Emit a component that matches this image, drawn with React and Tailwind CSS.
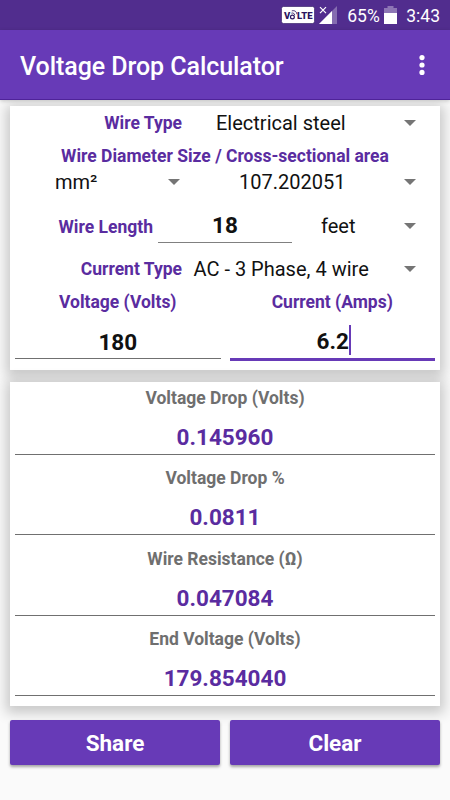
import { useState } from "react";

const results = [
  { label: "Voltage Drop (Volts)", value: "0.145960" },
  { label: "Voltage Drop %", value: "0.0811" },
  { label: "Wire Resistance (Ω)", value: "0.047084" },
  { label: "End Voltage (Volts)", value: "179.854040" },
];

function Caret() {
  return (
    <svg width="12" height="6" viewBox="0 0 12 6" className="shrink-0">
      <path d="M0 0h12L6 6z" fill="#757575" />
    </svg>
  );
}

function Label({ className = "", children }) {
  return (
    <span className={`text-[17.5px] font-bold whitespace-nowrap text-[#5a2ca0] ${className}`}>
      {children}
    </span>
  );
}

function StatusBar() {
  return (
    <div className="flex h-[30px] items-center justify-end bg-[#512d8e] pr-[10px] text-white">
      {/* VoLTE badge */}
      <svg width="34" height="18" viewBox="0 0 34 18" className="mr-1">
        <rect x="0.5" y="0.5" width="33" height="17" rx="2" fill="#fff" stroke="#2b1660" strokeWidth="0.6" />
        <text x="3" y="13" fontFamily="Roboto" fontSize="9.5" fontWeight="900" fill="#2b1660">V</text>
        <circle cx="11.4" cy="11" r="1.9" fill="none" stroke="#2b1660" strokeWidth="1.2" />
        <path d="M10.4 7.2c1.8-.7 3.2.4 3.3 2M10.8 4.9c2.8-.9 5 .9 5 3.3" fill="none" stroke="#2b1660" strokeWidth="0.9" />
        <text x="16" y="13" fontFamily="Roboto" fontSize="9.5" fontWeight="900" fill="#2b1660" textLength="15.5">LTE</text>
      </svg>
      {/* signal */}
      <svg width="19" height="18" viewBox="0 0 19 18" className="mr-[9px]">
        <path d="M18 0v18H0z" fill="#fff" fillOpacity="0.3" />
        <path d="M13 5v13H0z" fill="#fff" />
        <path d="M1 1.2l6 6M7 1.2l-6 6" stroke="#fff" strokeWidth="1.2" />
      </svg>
      <span className="w-[33px] pt-px text-[17.5px] leading-5">65%</span>
      <svg width="13" height="18" viewBox="0 0 13 18" className="mr-[9px] ml-[4px]">
        <path d="M3.5 0h6v2H13v5H0V2h3.5z" fill="#fff" fillOpacity="0.35" />
        <path d="M0 7h13v11H0z" fill="#fff" />
      </svg>
      <span className="pt-px text-[17.5px] leading-5">3:43</span>
    </div>
  );
}

function AppBar() {
  return (
    <header className="relative z-10 flex h-[70px] items-center justify-between border-b border-[#4f2399] bg-[#673ab7] pr-[25px] pl-5 shadow-[0_1px_4px_rgba(0,0,0,0.2)]">
      <h1 className="pt-[4px] text-[25px] font-medium tracking-[-0.06px] text-white">Voltage Drop Calculator</h1>
      <button aria-label="More options">
        <svg width="6" height="20" viewBox="0 0 6 20" fill="#fff">
          <circle cx="3" cy="2.6" r="2.6" />
          <circle cx="3" cy="10" r="2.6" />
          <circle cx="3" cy="17.4" r="2.6" />
        </svg>
      </button>
    </header>
  );
}

export default function App() {
  const [wireLength, setWireLength] = useState("18");
  const [voltage, setVoltage] = useState("180");
  const [current] = useState("6.2");

  return (
    <div className="h-[800px] w-[450px] overflow-hidden bg-[#fafafa] font-[Roboto,sans-serif] text-[#111]">
      <StatusBar />
      <AppBar />

      <main className="px-[10px] pt-[6px]">
        <section className="h-[264px] bg-white px-[5px] text-xl shadow-[0_3px_12px_4px_rgba(0,0,0,0.2)]">
          <div className="flex h-[33px] items-center pr-[19px]">
            <Label className="w-[167px] pt-px text-right">Wire Type</Label>
            <span className="flex-1 pl-[34px]">Electrical steel</span>
            <Caret />
          </div>

          <div className="flex h-8 items-center justify-center">
            <Label className="pt-[2px]">Wire Diameter Size / Cross-sectional area</Label>
          </div>

          <div className="flex h-[22px] items-center pr-[19px] pl-[40px]">
            <span className="w-[113px]">mm²</span>
            <Caret />
            <span className="flex-1 pl-[59px]">107.202051</span>
            <Caret />
          </div>

          <div className="flex h-[66px] items-center pr-[19px]">
            <Label className="w-[138px] pt-[2px] text-right">Wire Length</Label>
            <input
              className="ml-[5px] h-[34px] w-[134px] border-b border-[#808080] pb-px text-center text-[22.5px] font-bold outline-none"
              value={wireLength}
              onChange={(e) => setWireLength(e.target.value)}
            />
            <span className="flex-1 pl-[29px]">feet</span>
            <Caret />
          </div>

          <div className="flex h-5 items-center pr-[19px]">
            <Label className="w-[167px] pt-px text-right">Current Type</Label>
            <span className="flex-1 pl-[11.5px]">AC - 3 Phase, 4 wire</span>
            <Caret />
          </div>

          <div className="grid h-[46px] grid-cols-2 items-center gap-[9px] text-center">
            <Label>Voltage (Volts)</Label>
            <Label>Current (Amps)</Label>
          </div>

          <div className="grid grid-cols-2 gap-[9px]">
            <input
              className="h-[34px] w-full border-b border-[#707070] text-center text-[22.5px] font-bold outline-none"
              value={voltage}
              onChange={(e) => setVoltage(e.target.value)}
            />
            <div className="flex h-[36px] items-center justify-center border-b-[3px] border-[#673ab7] pl-[3px] text-[22.5px] font-bold">
              <span className="pt-px">{current}</span>
              <span className="mb-[3px] h-[30px] w-[2px] bg-[#673ab7]" />
            </div>
          </div>
        </section>

        <section className="mt-3 h-[324px] bg-white px-[5px] shadow-[0_3px_12px_4px_rgba(0,0,0,0.2)]">
          {results.map((item, index) => (
            <div
              key={item.label}
              className={`flex flex-col items-center border-b border-[#707070] ${
                index === 0 ? "h-[73px]" : "h-[80.3px] pt-[7.3px]"
              }`}
            >
              <span className="h-8 text-[17.5px] leading-8 font-bold text-[#6f6f6f]">
                {item.label}
              </span>
              <span className="h-10 pt-[2px] text-[22.5px] leading-[42px] font-bold text-[#5a2ca0]">
                {item.value}
              </span>
            </div>
          ))}
        </section>

        <div className="mt-[14px] grid grid-cols-2 gap-[10px]">
          <button className="h-[45px] rounded-xs bg-[#673ab7] pt-[2px] text-[22.5px] font-bold text-white shadow-[0_2px_3px_rgba(0,0,0,0.35)]">
            Share
          </button>
          <button className="h-[45px] rounded-xs bg-[#673ab7] pt-[2px] text-[22.5px] font-bold text-white shadow-[0_2px_3px_rgba(0,0,0,0.35)]">
            Clear
          </button>
        </div>
      </main>
    </div>
  );
}
